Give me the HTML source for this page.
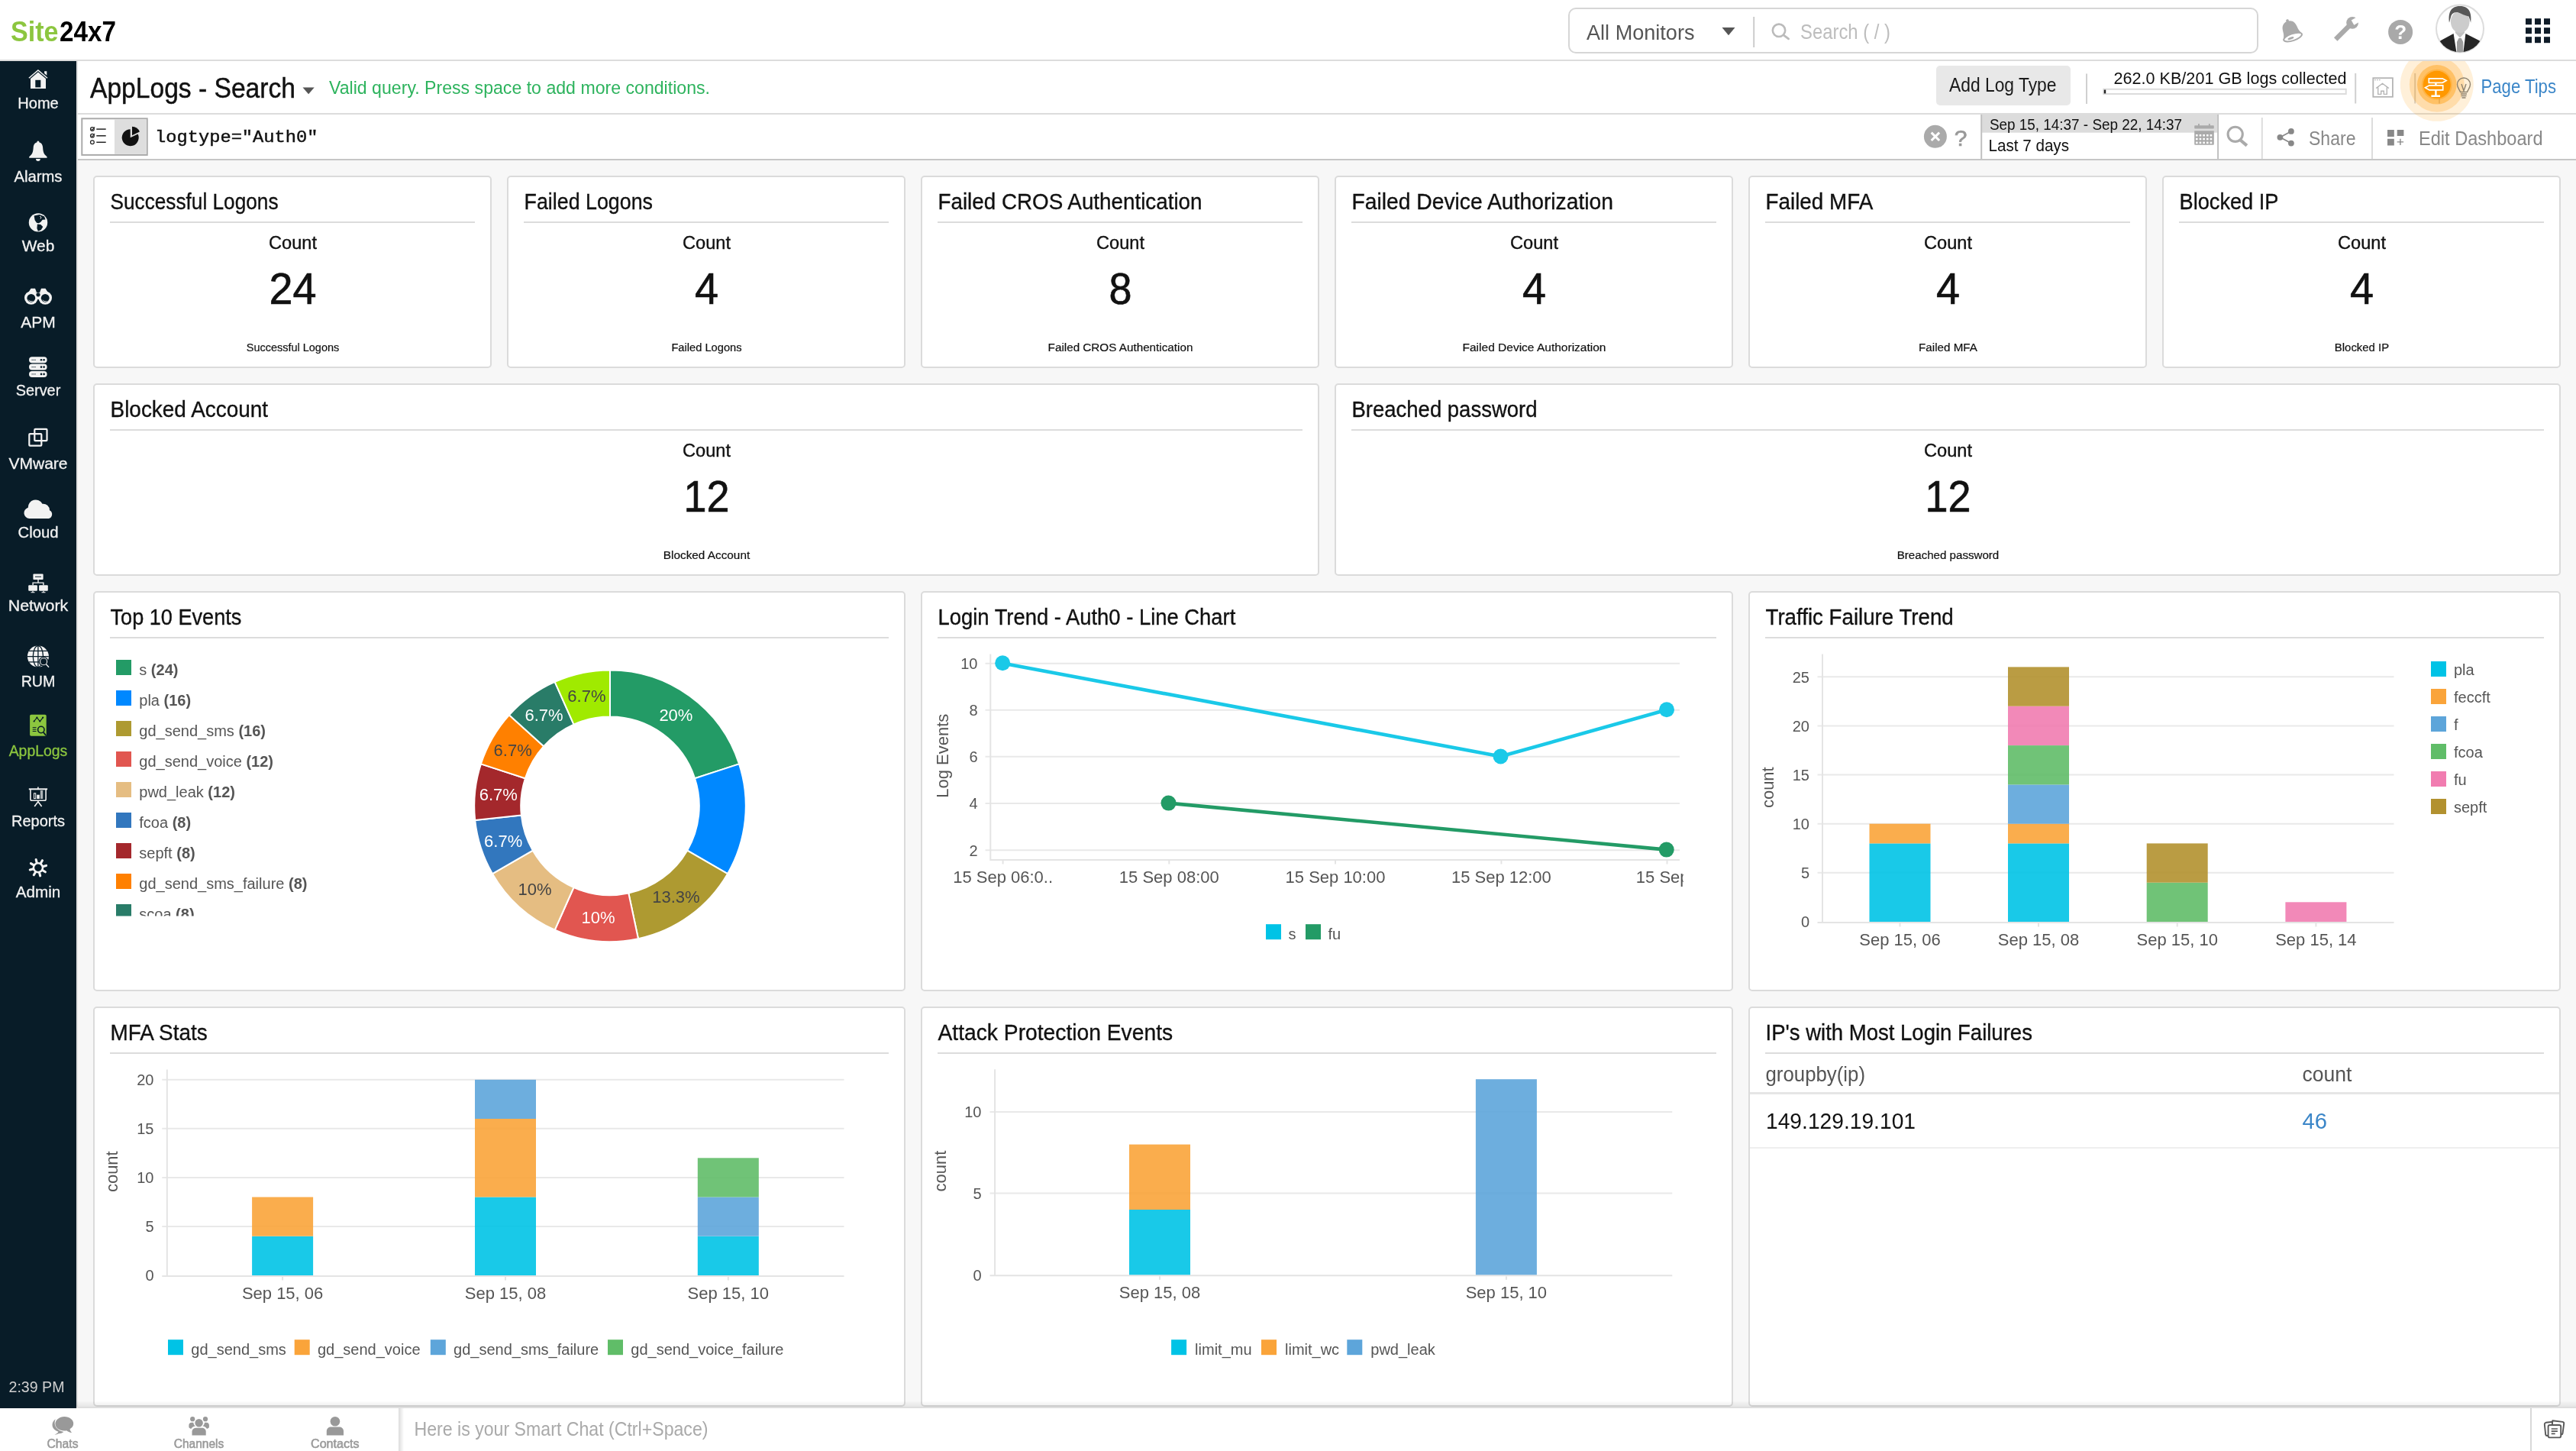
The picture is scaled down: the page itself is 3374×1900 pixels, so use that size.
<!DOCTYPE html>
<html lang="en"><head><meta charset="utf-8"><title>AppLogs - Search | Site24x7</title>
<style>
html,body{margin:0;padding:0}
body{width:3374px;height:1900px;background:#f7f7f7;position:relative;overflow:hidden;font-family:"Liberation Sans",sans-serif}
body>div{position:absolute;box-sizing:content-box}
#ov{position:absolute;left:0;top:0;will-change:transform;font-family:"Liberation Sans",sans-serif}
#ov text{white-space:pre}
</style></head><body>
<div class="hdr" style="left:0px;top:0px;width:3374px;height:78px;background:#fff;border-bottom:2px solid #dcdcdc"></div>
<div style="left:100px;top:80px;width:2px;height:1762px;background:#e2e2e2"></div>
<div class="titlebar" style="left:102px;top:80px;width:3272px;height:68px;background:#fff;border-bottom:2px solid #dcdcdc"></div>
<div class="querybar" style="left:102px;top:150px;width:3272px;height:58px;background:#fff;border-bottom:2px solid #c6c6c6"></div>
<div class="chatbar" style="left:0px;top:1842px;width:3374px;height:56px;background:#fff;border-top:2px solid #dedede"></div>
<div class="nav" style="left:0px;top:80px;width:100px;height:1764px;background:#081c28"></div>
<div class="card" style="left:122px;top:230px;width:518px;height:248px;background:#fff;border:2px solid #dbdbdb;border-radius:5px"></div>
<div style="left:144px;top:290px;width:478px;height:2px;background:#dcdcdc"></div>
<div class="card" style="left:664px;top:230px;width:518px;height:248px;background:#fff;border:2px solid #dbdbdb;border-radius:5px"></div>
<div style="left:686px;top:290px;width:478px;height:2px;background:#dcdcdc"></div>
<div class="card" style="left:1206px;top:230px;width:518px;height:248px;background:#fff;border:2px solid #dbdbdb;border-radius:5px"></div>
<div style="left:1228px;top:290px;width:478px;height:2px;background:#dcdcdc"></div>
<div class="card" style="left:1748px;top:230px;width:518px;height:248px;background:#fff;border:2px solid #dbdbdb;border-radius:5px"></div>
<div style="left:1770px;top:290px;width:478px;height:2px;background:#dcdcdc"></div>
<div class="card" style="left:2290px;top:230px;width:518px;height:248px;background:#fff;border:2px solid #dbdbdb;border-radius:5px"></div>
<div style="left:2312px;top:290px;width:478px;height:2px;background:#dcdcdc"></div>
<div class="card" style="left:2832px;top:230px;width:518px;height:248px;background:#fff;border:2px solid #dbdbdb;border-radius:5px"></div>
<div style="left:2854px;top:290px;width:478px;height:2px;background:#dcdcdc"></div>
<div class="card" style="left:122px;top:502px;width:1602px;height:248px;background:#fff;border:2px solid #dbdbdb;border-radius:5px"></div>
<div style="left:144px;top:562px;width:1562px;height:2px;background:#dcdcdc"></div>
<div class="card" style="left:1748px;top:502px;width:1602px;height:248px;background:#fff;border:2px solid #dbdbdb;border-radius:5px"></div>
<div style="left:1770px;top:562px;width:1562px;height:2px;background:#dcdcdc"></div>
<div class="card" style="left:122px;top:774px;width:1060px;height:520px;background:#fff;border:2px solid #dbdbdb;border-radius:5px"></div>
<div style="left:144px;top:834px;width:1020px;height:2px;background:#dcdcdc"></div>
<div class="card" style="left:1206px;top:774px;width:1060px;height:520px;background:#fff;border:2px solid #dbdbdb;border-radius:5px"></div>
<div style="left:1228px;top:834px;width:1020px;height:2px;background:#dcdcdc"></div>
<div class="card" style="left:2290px;top:774px;width:1060px;height:520px;background:#fff;border:2px solid #dbdbdb;border-radius:5px"></div>
<div style="left:2312px;top:834px;width:1020px;height:2px;background:#dcdcdc"></div>
<div class="card" style="left:122px;top:1318px;width:1060px;height:520px;background:#fff;border:2px solid #dbdbdb;border-radius:5px"></div>
<div style="left:144px;top:1378px;width:1020px;height:2px;background:#dcdcdc"></div>
<div class="card" style="left:1206px;top:1318px;width:1060px;height:520px;background:#fff;border:2px solid #dbdbdb;border-radius:5px"></div>
<div style="left:1228px;top:1378px;width:1020px;height:2px;background:#dcdcdc"></div>
<div class="card" style="left:2290px;top:1318px;width:1060px;height:520px;background:#fff;border:2px solid #dbdbdb;border-radius:5px"></div>
<div style="left:2312px;top:1378px;width:1020px;height:2px;background:#dcdcdc"></div>
<div style="left:2292px;top:1430px;width:1060px;height:3px;background:#e6e6e6"></div>
<div style="left:2292px;top:1502px;width:1060px;height:2px;background:#efefef"></div>
<svg id="ov" width="3374" height="1900" viewBox="0 0 3374 1900">
<text x="144.5" y="274.0" font-size="29" textLength="220.0" lengthAdjust="spacingAndGlyphs" fill="#111" stroke="#111" stroke-width=".35">Successful Logons</text>
<text x="383.5" y="326.0" font-size="23" text-anchor="middle" textLength="63.0" lengthAdjust="spacingAndGlyphs" fill="#111" stroke="#111" stroke-width=".35">Count</text>
<text x="383.5" y="398.0" font-size="58" text-anchor="middle" textLength="62.0" lengthAdjust="spacingAndGlyphs" fill="#111" stroke="#111" stroke-width=".7">24</text>
<text x="383.5" y="460.0" font-size="15.5" text-anchor="middle" textLength="121.5" lengthAdjust="spacingAndGlyphs" fill="#111" stroke="#111" stroke-width=".2">Successful Logons</text>
<text x="686.5" y="274.0" font-size="29" textLength="168.5" lengthAdjust="spacingAndGlyphs" fill="#111" stroke="#111" stroke-width=".35">Failed Logons</text>
<text x="925.5" y="326.0" font-size="23" text-anchor="middle" textLength="63.0" lengthAdjust="spacingAndGlyphs" fill="#111" stroke="#111" stroke-width=".35">Count</text>
<text x="925.5" y="398.0" font-size="58" text-anchor="middle" textLength="31.0" lengthAdjust="spacingAndGlyphs" fill="#111" stroke="#111" stroke-width=".7">4</text>
<text x="925.5" y="460.0" font-size="15.5" text-anchor="middle" textLength="92.2" lengthAdjust="spacingAndGlyphs" fill="#111" stroke="#111" stroke-width=".2">Failed Logons</text>
<text x="1228.5" y="274.0" font-size="29" textLength="346.0" lengthAdjust="spacingAndGlyphs" fill="#111" stroke="#111" stroke-width=".35">Failed CROS Authentication</text>
<text x="1467.5" y="326.0" font-size="23" text-anchor="middle" textLength="63.0" lengthAdjust="spacingAndGlyphs" fill="#111" stroke="#111" stroke-width=".35">Count</text>
<text x="1467.5" y="398.0" font-size="58" text-anchor="middle" textLength="30.0" lengthAdjust="spacingAndGlyphs" fill="#111" stroke="#111" stroke-width=".7">8</text>
<text x="1467.5" y="460.0" font-size="15.5" text-anchor="middle" textLength="189.8" lengthAdjust="spacingAndGlyphs" fill="#111" stroke="#111" stroke-width=".2">Failed CROS Authentication</text>
<text x="1770.5" y="274.0" font-size="29" textLength="342.5" lengthAdjust="spacingAndGlyphs" fill="#111" stroke="#111" stroke-width=".35">Failed Device Authorization</text>
<text x="2009.5" y="326.0" font-size="23" text-anchor="middle" textLength="63.0" lengthAdjust="spacingAndGlyphs" fill="#111" stroke="#111" stroke-width=".35">Count</text>
<text x="2009.5" y="398.0" font-size="58" text-anchor="middle" textLength="31.0" lengthAdjust="spacingAndGlyphs" fill="#111" stroke="#111" stroke-width=".7">4</text>
<text x="2009.5" y="460.0" font-size="15.5" text-anchor="middle" textLength="188.0" lengthAdjust="spacingAndGlyphs" fill="#111" stroke="#111" stroke-width=".2">Failed Device Authorization</text>
<text x="2312.5" y="274.0" font-size="29" textLength="140.7" lengthAdjust="spacingAndGlyphs" fill="#111" stroke="#111" stroke-width=".35">Failed MFA</text>
<text x="2551.5" y="326.0" font-size="23" text-anchor="middle" textLength="63.0" lengthAdjust="spacingAndGlyphs" fill="#111" stroke="#111" stroke-width=".35">Count</text>
<text x="2551.5" y="398.0" font-size="58" text-anchor="middle" textLength="31.0" lengthAdjust="spacingAndGlyphs" fill="#111" stroke="#111" stroke-width=".7">4</text>
<text x="2551.5" y="460.0" font-size="15.5" text-anchor="middle" textLength="76.8" lengthAdjust="spacingAndGlyphs" fill="#111" stroke="#111" stroke-width=".2">Failed MFA</text>
<text x="2854.5" y="274.0" font-size="29" textLength="130.0" lengthAdjust="spacingAndGlyphs" fill="#111" stroke="#111" stroke-width=".35">Blocked IP</text>
<text x="3093.5" y="326.0" font-size="23" text-anchor="middle" textLength="63.0" lengthAdjust="spacingAndGlyphs" fill="#111" stroke="#111" stroke-width=".35">Count</text>
<text x="3093.5" y="398.0" font-size="58" text-anchor="middle" textLength="31.0" lengthAdjust="spacingAndGlyphs" fill="#111" stroke="#111" stroke-width=".7">4</text>
<text x="3093.5" y="460.0" font-size="15.5" text-anchor="middle" textLength="71.4" lengthAdjust="spacingAndGlyphs" fill="#111" stroke="#111" stroke-width=".2">Blocked IP</text>
<text x="144.5" y="546.0" font-size="29" textLength="206.6" lengthAdjust="spacingAndGlyphs" fill="#111" stroke="#111" stroke-width=".35">Blocked Account</text>
<text x="925.5" y="598.0" font-size="23" text-anchor="middle" textLength="63.0" lengthAdjust="spacingAndGlyphs" fill="#111" stroke="#111" stroke-width=".35">Count</text>
<text x="925.5" y="670.0" font-size="58" text-anchor="middle" textLength="60.0" lengthAdjust="spacingAndGlyphs" fill="#111" stroke="#111" stroke-width=".7">12</text>
<text x="925.5" y="732.0" font-size="15.5" text-anchor="middle" textLength="113.4" lengthAdjust="spacingAndGlyphs" fill="#111" stroke="#111" stroke-width=".2">Blocked Account</text>
<text x="1770.5" y="546.0" font-size="29" textLength="243.0" lengthAdjust="spacingAndGlyphs" fill="#111" stroke="#111" stroke-width=".35">Breached password</text>
<text x="2551.5" y="598.0" font-size="23" text-anchor="middle" textLength="63.0" lengthAdjust="spacingAndGlyphs" fill="#111" stroke="#111" stroke-width=".35">Count</text>
<text x="2551.5" y="670.0" font-size="58" text-anchor="middle" textLength="60.0" lengthAdjust="spacingAndGlyphs" fill="#111" stroke="#111" stroke-width=".7">12</text>
<text x="2551.5" y="732.0" font-size="15.5" text-anchor="middle" textLength="133.5" lengthAdjust="spacingAndGlyphs" fill="#111" stroke="#111" stroke-width=".2">Breached password</text>
<text x="144.5" y="818.0" font-size="29" textLength="171.8" lengthAdjust="spacingAndGlyphs" fill="#111" stroke="#111" stroke-width=".35">Top 10 Events</text>
<text x="1228.5" y="818.0" font-size="29" textLength="389.8" lengthAdjust="spacingAndGlyphs" fill="#111" stroke="#111" stroke-width=".35">Login Trend - Auth0 - Line Chart</text>
<text x="2312.5" y="818.0" font-size="29" textLength="246.2" lengthAdjust="spacingAndGlyphs" fill="#111" stroke="#111" stroke-width=".35">Traffic Failure Trend</text>
<text x="144.5" y="1362.0" font-size="29" textLength="127.1" lengthAdjust="spacingAndGlyphs" fill="#111" stroke="#111" stroke-width=".35">MFA Stats</text>
<text x="1228.5" y="1362.0" font-size="29" textLength="307.6" lengthAdjust="spacingAndGlyphs" fill="#111" stroke="#111" stroke-width=".35">Attack Protection Events</text>
<text x="2312.5" y="1362.0" font-size="29" textLength="349.4" lengthAdjust="spacingAndGlyphs" fill="#111" stroke="#111" stroke-width=".35">IP's with Most Login Failures</text>
<text x="14.0" y="54.0" font-size="36.5" textLength="62.5" lengthAdjust="spacingAndGlyphs" font-weight="bold" fill="#8cc63f">Site</text>
<text x="78.0" y="54.0" font-size="36.5" textLength="74.0" lengthAdjust="spacingAndGlyphs" font-weight="bold" fill="#000">24x7</text>
<rect x="2055" y="11" width="902" height="58" rx="9" fill="#fff" stroke="#d6d6d6" stroke-width="2"/>
<text x="2078.0" y="52.0" font-size="27.5" textLength="141.5" lengthAdjust="spacingAndGlyphs" fill="#555">All Monitors</text>
<path d="M2255.5 36h17l-8.5 10.3z" fill="#555"/>
<path d="M2297.2 22v40" stroke="#ccc" stroke-width="2"/>
<circle cx="2330" cy="39.8" r="8.2" fill="none" stroke="#bbb" stroke-width="2.6"/><path d="M2336 45.8l6.6 5" stroke="#bbb" stroke-width="2.8" stroke-linecap="round"/>
<text x="2358.0" y="51.0" font-size="27.5" textLength="118.0" lengthAdjust="spacingAndGlyphs" fill="#bdbdbd">Search ( / )</text>
<g transform="translate(3003.100 48.600) rotate(-19)" fill="#aaa"><path d="M-13.400 0C-11.500-3-10.300-6-10-8.600C-9.700-12-9.500-15-8.300-17.200C-6.500-20.500-3.500-22 0-22C3.500-22 6.500-20.500 8.300-17.200C9.500-15 9.700-12 10-8.600C10.300-6 11.500-3 13.400 0z"/><circle cx=".3" cy="-22.600" r="1.900"/><ellipse rx="12.500" ry="4.500" fill="#fff" stroke="#aaa" stroke-width="1.900"/><ellipse cx="-3" cy=".5" rx="4.200" ry="1.500"/></g>
<g><path d="M3059.200 51.600L3079 31.800" stroke="#aaa" stroke-width="6.300"/><circle cx="3081.100" cy="29.800" r="7.900" fill="#aaa"/><path d="M3081.500 29.550L3091.500 23.800" stroke="#fff" stroke-width="7.200"/></g>
<circle cx="3144.1" cy="41.9" r="16" fill="#a9a9a9"/>
<text x="3144.3" y="51.3" font-size="26" text-anchor="middle" font-weight="bold" fill="#fff">?</text>
<defs><clipPath id="av"><circle cx="3222" cy="37.6" r="30.8"/></clipPath></defs>
<circle cx="3222" cy="37.6" r="31" fill="#fff" stroke="#dcdcdc" stroke-width="2"/>
<g clip-path="url(#av)"><path d="M3188 72L3196.500 53.200L3213.600 44.100L3218 72ZM3256 72L3247.600 53.200L3229.400 44.100L3226 72Z" fill="#262626"/><path d="M3220.500 50h3.200l2.600 5l-.2 17h-8l-.2-17z" fill="#9c9c9c"/><path d="M3215.900 36h12.100v7l-6 6.500l-6.100-6.500z" fill="#c2c2c2"/><ellipse cx="3222.200" cy="28.500" rx="12.300" ry="14.500" fill="#cccccc"/><path d="M3208 29.800C3206.500 18 3209 8 3222 8C3235 8 3237.500 18 3236.200 29.800C3235.500 27 3234.500 24 3233.500 21.500C3229 20.500 3224 18 3219 16C3215 15.500 3212 17 3210.500 20.500C3209.500 23.500 3209 26.500 3208 29.800Z" fill="#575757"/></g>
<rect x="3308" y="24.2" width="8" height="8" fill="#0f1c28"/>
<rect x="3320" y="24.2" width="8" height="8" fill="#0f1c28"/>
<rect x="3332" y="24.2" width="8" height="8" fill="#0f1c28"/>
<rect x="3308" y="36.2" width="8" height="8" fill="#0f1c28"/>
<rect x="3320" y="36.2" width="8" height="8" fill="#0f1c28"/>
<rect x="3332" y="36.2" width="8" height="8" fill="#0f1c28"/>
<rect x="3308" y="48.2" width="8" height="8" fill="#0f1c28"/>
<rect x="3320" y="48.2" width="8" height="8" fill="#0f1c28"/>
<rect x="3332" y="48.2" width="8" height="8" fill="#0f1c28"/>
<text x="118.0" y="127.6" font-size="36.5" textLength="269.0" lengthAdjust="spacingAndGlyphs" fill="#111" stroke="#111" stroke-width=".45">AppLogs - Search</text>
<path d="M396.5 114.5h15.2l-7.6 8.8z" fill="#555"/>
<text x="431.0" y="123.0" font-size="24.5" textLength="499.0" lengthAdjust="spacingAndGlyphs" fill="#2db35d">Valid query. Press space to add more conditions.</text>
<rect x="2536" y="86" width="176" height="52" rx="5" fill="#e8e8e8"/>
<text x="2553.0" y="120.2" font-size="26" textLength="140.5" lengthAdjust="spacingAndGlyphs" fill="#1a1a1a">Add Log Type</text>
<path d="M2733 96.5v39.5M3085.2 96v39.5M3163.2 96v39.5" stroke="#d0d0d0" stroke-width="2"/>
<text x="2768.5" y="109.5" font-size="22" textLength="305.0" lengthAdjust="spacingAndGlyphs" fill="#111">262.0 KB/201 GB logs collected</text>
<rect x="2755.3" y="116.8" width="317.4" height="6.2" fill="#fff" stroke="#dcdcdc" stroke-width="2"/><rect x="2755.8" y="117.6" width="2.4" height="4.8" fill="#222"/>
<g fill="none" stroke="#b4b4b4"><rect x="3108.300" y="102.200" width="25.600" height="24.600" stroke-width="1.800"/><path d="M3112.100 115.600l8.400-6.300l8.400 6.300M3114.700 114.500v8.900h4v-4.200h3.600v4.200h4v-8.900" stroke-width="1.400"/><path d="M3110.200 104.600h1.600m1.300 0h1.600m1.300 0h1.600" stroke-width="1.100"/></g>
<path d="M3195 96v39.500" stroke="#d0d0d0" stroke-width="2"/>
<defs><clipPath id="pc"><rect x="3100" y="80" width="274" height="120"/></clipPath></defs><g clip-path="url(#pc)"><circle cx="3191.800" cy="110.800" r="48" fill="#ff9800" fill-opacity=".15"/><circle cx="3191.800" cy="110.800" r="36" fill="#ff9800" fill-opacity=".22"/><circle cx="3191.800" cy="110.800" r="25.8" fill="#ff9800" fill-opacity=".4"/><circle cx="3191.800" cy="110.800" r="20" fill="#ff9800" fill-opacity=".35"/><circle cx="3191.800" cy="110.800" r="18" fill="#ff9800"/></g>
<g fill="none" stroke="#fff" stroke-width="1.700"><path d="M3181.300 102.800h17.800l5 2.750l-5 2.750h-17.800z"/><path d="M3199.700 111.800h-17.800l-5.400 3.050l5.400 3.050h17.800z"/><path d="M3190.400 108.300v3.500M3190.400 118v7.700M3184.400 125.700h11.600" stroke-width="2.400"/></g>
<g fill="none" stroke="#8e836f" stroke-width="1.400"><path d="M3222.5 120.5c-1-3-4-5.500-4-10a8.500 8.500 0 0 1 17 0c0 4.500-3 7-4 10z"/><path d="M3223 123h8M3223.500 125.500h7M3224.500 128h5"/><path d="M3224 110l3 9l3-9"/></g>
<text x="3249.5" y="121.9" font-size="25" textLength="98.5" lengthAdjust="spacingAndGlyphs" fill="#3b86c8">Page Tips</text>
<rect x="107.3" y="155.3" width="85.4" height="47.6" fill="#fff" stroke="#aaa" stroke-width="2"/><rect x="150" y="156.3" width="41.7" height="45.6" fill="#dedede"/>
<circle cx="120.9" cy="169.1" r="2.4" fill="none" stroke="#222" stroke-width="1.2"/><path d="M126.3 169.1h12.4" stroke="#222" stroke-width="1.5"/>
<circle cx="120.9" cy="177.8" r="2.4" fill="none" stroke="#222" stroke-width="1.2"/><path d="M126.3 177.8h12.4" stroke="#222" stroke-width="1.5"/>
<circle cx="120.9" cy="186.3" r="2.4" fill="none" stroke="#222" stroke-width="1.2"/><path d="M126.3 186.3h12.4" stroke="#222" stroke-width="1.5"/>
<path d="M119.600 168.800l1.200 1.500l3.300-4M119.600 177.500l1.200 1.500l3.300-4" fill="none" stroke="#222" stroke-width="1.100"/>
<path d="M170.7 180.2V169.200a11 11 0 1 0 9.9 6.200z" fill="#111"/><path d="M173 177.300v-11.500a11.300 11.300 0 0 1 9.900 6.600z" fill="#111"/>
<text x="203.0" y="186.0" font-size="22.6" textLength="213.5" lengthAdjust="spacingAndGlyphs" font-family="Liberation Mono" fill="#111" stroke="#111" stroke-width=".45">logtype="Auth0"</text>
<circle cx="2534.9" cy="178.800" r="15" fill="#aaa"/><path d="M2529.700 173.600l10.400 10.400M2540.100 173.600l-10.400 10.400" stroke="#fff" stroke-width="3"/>
<text x="2568.0" y="190.9" font-size="30" text-anchor="middle" fill="#999" stroke="#999" stroke-width=".7">?</text>
<rect x="2596" y="150" width="308.200" height="23.700" fill="#dcdcdc"/>
<path d="M2595.200 150v58M2905.100 150v58" stroke="#c0c0c0" stroke-width="2"/>
<text x="2606.0" y="169.5" font-size="19.5" textLength="252.0" lengthAdjust="spacingAndGlyphs" fill="#111">Sep 15, 14:37 - Sep 22, 14:37</text>
<text x="2604.5" y="197.8" font-size="22.5" textLength="105.5" lengthAdjust="spacingAndGlyphs" fill="#111">Last 7 days</text>
<g fill="#aaa"><rect x="2874.200" y="164.200" width="25.600" height="4.400" rx=".8"/><rect x="2879" y="162.100" width="1.900" height="3"/><rect x="2892.900" y="162.100" width="1.900" height="3"/><path d="M2874.200 171.200h25.600v17.600q0 1-1 1h-23.600q-1 0-1-1z"/></g>
<g fill="#fff"><rect x="2876.00" y="176.00" width="2.600" height="2.500"/><rect x="2880.66" y="176.00" width="2.600" height="2.500"/><rect x="2885.32" y="176.00" width="2.600" height="2.500"/><rect x="2889.98" y="176.00" width="2.600" height="2.500"/><rect x="2894.64" y="176.00" width="2.600" height="2.500"/><rect x="2876.00" y="180.80" width="2.600" height="2.500"/><rect x="2880.66" y="180.80" width="2.600" height="2.500"/><rect x="2885.32" y="180.80" width="2.600" height="2.500"/><rect x="2889.98" y="180.80" width="2.600" height="2.500"/><rect x="2894.64" y="180.80" width="2.600" height="2.500"/><rect x="2876.00" y="185.60" width="2.600" height="2.500"/><rect x="2880.66" y="185.60" width="2.600" height="2.500"/><rect x="2885.32" y="185.60" width="2.600" height="2.500"/><rect x="2889.98" y="185.60" width="2.600" height="2.500"/><rect x="2894.64" y="185.60" width="2.600" height="2.500"/></g>
<circle cx="2927.700" cy="175.800" r="9.600" fill="none" stroke="#aaa" stroke-width="3.100"/><path d="M2934.500 183.500l8.400 7.200" stroke="#aaa" stroke-width="4.200"/>
<path d="M2962.800 154v54M3107 154v54" stroke="#dcdcdc" stroke-width="2"/>
<g fill="#888" stroke="#888"><path d="M2986.400 179.800L3000.900 171.900M2986.400 179.800L3000.900 187.600" stroke-width="1.700" fill="none"/><circle cx="2986.400" cy="179.800" r="3.900" stroke="none"/><circle cx="3000.900" cy="171.900" r="3.900" stroke="none"/><circle cx="3000.900" cy="187.600" r="3.900" stroke="none"/></g>
<text x="3024.0" y="189.9" font-size="25" textLength="61.5" lengthAdjust="spacingAndGlyphs" fill="#888">Share</text>
<g fill="#888"><rect x="3127" y="170" width="8.800" height="9"/><rect x="3139.700" y="170" width="8.700" height="8"/><rect x="3127" y="181.800" width="8.800" height="8.700"/><path d="M3139.700 185.200h8.400v1.400h-8.400zM3143.200 181.700h1.400v8.400h-1.400z"/></g>
<text x="3168.0" y="189.9" font-size="25" textLength="162.5" lengthAdjust="spacingAndGlyphs" fill="#888">Edit Dashboard</text>
<g fill="#f2f2f2"><path d="M49.900 94.600L60 102.900V115.900H40V102.900z"/><path d="M37.900 102.300L49.900 92L62 102.300" fill="none" stroke="#f2f2f2" stroke-width="1.500"/><path d="M58.100 93.200h3.200v5.600l-3.200-2.800z"/><rect x="46.300" y="104.800" width="7" height="9.600" fill="#081c28"/></g>
<text x="50.0" y="141.5" font-size="19.8" text-anchor="middle" textLength="53.5" lengthAdjust="spacingAndGlyphs" fill="#f2f2f2" stroke="#f2f2f2" stroke-width=".3">Home</text>
<g fill="#f2f2f2"><path d="M38.300 206.700c-.5-1.300 .300-1.900 1.500-2.900c3-2.700 3.600-6 3.900-10.800c.3-4.300 2.500-6.800 6.200-6.800s5.900 2.500 6.200 6.800c.3 4.800 .9 8.100 3.900 10.800c1.200 1 2 1.600 1.500 2.900z"/><circle cx="49.900" cy="186" r="1.500"/><path d="M47 208h5.800a2.900 2.900 0 0 1-5.800 0z"/></g>
<text x="50.0" y="237.6" font-size="19.8" text-anchor="middle" textLength="63.0" lengthAdjust="spacingAndGlyphs" fill="#f2f2f2" stroke="#f2f2f2" stroke-width=".3">Alarms</text>
<circle cx="50" cy="291.400" r="12.200" fill="#f2f2f2"/><g fill="#081c28"><path d="M44.600 282.500L51.800 281.100L58.100 283.500L59.500 287.400L55.700 287.800L53.300 290.700L50.900 292.200L48 291.700L45.600 288.300z"/><path d="M48.900 293.600L53.300 294.100L56.200 297L53.800 300.900L49.900 302.800L48.400 298.900z"/></g><path d="M52 283l2 1.500l-1 2" stroke="#f2f2f2" stroke-width="1" fill="none"/>
<text x="50.0" y="328.9" font-size="19.8" text-anchor="middle" textLength="42.5" lengthAdjust="spacingAndGlyphs" fill="#f2f2f2" stroke="#f2f2f2" stroke-width=".3">Web</text>
<g fill="#f2f2f2"><circle cx="40.800" cy="390" r="8.800"/><circle cx="59.200" cy="390" r="8.800"/><path d="M36.500 384l4-6.200h5.500l2 5z M63.500 384l-4-6.200h-5.500l-2 5z"/><rect x="46" y="383" width="8" height="9"/><circle cx="50" cy="385.800" r="2.600" fill="#081c28"/><circle cx="40.800" cy="390.300" r="5.400" fill="#081c28"/><circle cx="59.200" cy="390.300" r="5.400" fill="#081c28"/><path d="M37 392a4 4 0 0 0 7 1.500a5.500 5.500 0 0 1-7-1.500zM55.400 392a4 4 0 0 0 7 1.500a5.500 5.500 0 0 1-7-1.500z"/></g>
<text x="50.0" y="428.6" font-size="19.8" text-anchor="middle" textLength="45.5" lengthAdjust="spacingAndGlyphs" fill="#f2f2f2" stroke="#f2f2f2" stroke-width=".3">APM</text>
<rect x="38" y="467.3" width="23.600" height="8" rx="4" fill="#f2f2f2"/><circle cx="54" cy="471.3" r="1.300" fill="#081c28"/><circle cx="57.600" cy="471.3" r="1.300" fill="#081c28"/><path d="M41.500 471.3h6" stroke="#081c28" stroke-width="1" stroke-dasharray="1.200 .8"/>
<rect x="38" y="476.6" width="23.600" height="8" rx="4" fill="#f2f2f2"/><circle cx="54" cy="480.6" r="1.300" fill="#081c28"/><circle cx="57.600" cy="480.6" r="1.300" fill="#081c28"/><path d="M41.500 480.6h6" stroke="#081c28" stroke-width="1" stroke-dasharray="1.200 .8"/>
<rect x="38" y="485.9" width="23.600" height="8" rx="4" fill="#f2f2f2"/><circle cx="54" cy="489.9" r="1.300" fill="#081c28"/><circle cx="57.600" cy="489.9" r="1.300" fill="#081c28"/><path d="M41.500 489.9h6" stroke="#081c28" stroke-width="1" stroke-dasharray="1.200 .8"/>
<text x="50.0" y="517.7" font-size="19.8" text-anchor="middle" textLength="58.5" lengthAdjust="spacingAndGlyphs" fill="#f2f2f2" stroke="#f2f2f2" stroke-width=".3">Server</text>
<g fill="none" stroke="#f2f2f2" stroke-width="2.200"><rect x="45.300" y="561.900" width="16.200" height="15.300" rx="1"/><rect x="38.300" y="568.100" width="16" height="15.600" rx="1"/></g>
<text x="50.0" y="613.7" font-size="19.8" text-anchor="middle" textLength="77.2" lengthAdjust="spacingAndGlyphs" fill="#f2f2f2" stroke="#f2f2f2" stroke-width=".3">VMware</text>
<path d="M38.500 679a7.300 7.300 0 0 1-1.800-14.300a10 10 0 0 1 18.800-5a8.500 8.500 0 0 1 9.500 8.600a5.700 5.700 0 0 1-1.500 10.700z" fill="#f2f2f2"/>
<text x="50.0" y="703.5" font-size="19.8" text-anchor="middle" textLength="52.9" lengthAdjust="spacingAndGlyphs" fill="#f2f2f2" stroke="#f2f2f2" stroke-width=".3">Cloud</text>
<g fill="#f2f2f2"><rect x="43.400" y="751.400" width="13.200" height="7.500" rx="1"/><rect x="37.200" y="766.300" width="11.700" height="7.400" rx="1"/><rect x="51.100" y="766.300" width="11.700" height="7.400" rx="1"/><path d="M49.300 758.900h1.400v3.500h6.900v3.900h-1.400v-2.500h-12.400v2.500h-1.400v-3.900h6.900z"/><path d="M40.500 775.300h5v1h-5zM54.500 775.300h5v1h-5zM42.400 773.700h1.200v1.800h-1.200zM56.400 773.700h1.200v1.800h-1.200z"/></g><path d="M46 755.200h8" stroke="#081c28" stroke-width="1"/>
<text x="50.0" y="799.8" font-size="19.8" text-anchor="middle" textLength="78.5" lengthAdjust="spacingAndGlyphs" fill="#f2f2f2" stroke="#f2f2f2" stroke-width=".3">Network</text>
<circle cx="49.900" cy="859.600" r="14" fill="#f2f2f2"/><g fill="none" stroke="#081c28" stroke-width="1.300"><ellipse cx="49.900" cy="859.600" rx="6.600" ry="14"/><path d="M49.900 845.600v28M35.900 859.600h28M38 852.400h23.800M38 866.800h23.800"/></g><circle cx="57.100" cy="866.300" r="6.300" fill="#081c28"/><circle cx="57.100" cy="866.300" r="4.500" fill="none" stroke="#f2f2f2" stroke-width="1.100"/><path d="M60.400 869.800l3.600 3.900" stroke="#f2f2f2" stroke-width="1.400"/>
<text x="50.0" y="899.2" font-size="19.8" text-anchor="middle" textLength="44.7" lengthAdjust="spacingAndGlyphs" fill="#f2f2f2" stroke="#f2f2f2" stroke-width=".3">RUM</text>
<rect x="39.100" y="935.800" width="21.600" height="27.900" rx="1.800" fill="#8cc63f"/><g fill="none" stroke="#081c28" stroke-width="1.200"><path d="M44.600 944.500l3.800-4.900l3.900 4.900l3.900-4.900"/><path d="M42.700 952.600h4.800M42.700 955.100h4.800M42.700 957.500h4.800" stroke-width="1"/><circle cx="53.800" cy="955.500" r="4.200" stroke-width="1.600"/><path d="M56.800 958.900l3.300 3.900" stroke-width="1.800"/></g><g fill="#081c28"><circle cx="44.600" cy="944.500" r="1.100"/><circle cx="48.400" cy="939.600" r="1.100"/><circle cx="52.300" cy="944.500" r="1.100"/><circle cx="56.200" cy="939.600" r="1.100"/></g>
<text x="50.0" y="989.5" font-size="19.8" text-anchor="middle" textLength="76.7" lengthAdjust="spacingAndGlyphs" fill="#8cc63f" stroke="#8cc63f" stroke-width=".3">AppLogs</text>
<g fill="none" stroke="#f2f2f2" stroke-width="1.600"><path d="M37.800 1033.300h24.300" stroke-width="2"/><path d="M39.900 1033.500v12.900q0 1.800 1.800 1.800h16.600q1.800 0 1.800-1.800v-12.900"/><path d="M49.900 1030.600v2.400M49.900 1048.400v1.800M49.900 1049.700l-4.700 6.200M49.900 1049.700l4.700 6.200"/><rect x="44.500" y="1038.800" width="2.200" height="6.800" stroke-width="1"/></g><g fill="#f2f2f2"><rect x="48.200" y="1040.700" width="3.600" height="5.300"/><rect x="52.800" y="1035" width="3.400" height="11" fill-opacity=".7"/></g>
<text x="50.0" y="1081.5" font-size="19.8" text-anchor="middle" textLength="70.1" lengthAdjust="spacingAndGlyphs" fill="#f2f2f2" stroke="#f2f2f2" stroke-width=".3">Reports</text>
<g stroke="#f2f2f2" stroke-width="3.100" stroke-linecap="round"><path d="M49.900 1136.200L47.15 1125.55" /><path d="M49.900 1136.200L55.48 1126.72" /><path d="M49.900 1136.200L60.55 1133.45" /><path d="M49.900 1136.200L59.38 1141.78" /><path d="M49.900 1136.200L52.65 1146.85" /><path d="M49.900 1136.200L44.32 1145.68" /><path d="M49.900 1136.200L39.25 1138.95" /><path d="M49.900 1136.200L40.42 1130.62" /></g><circle cx="49.900" cy="1136.200" r="7.300" fill="#f2f2f2"/><circle cx="49.900" cy="1136.200" r="4.700" fill="#081c28"/>
<text x="50.0" y="1175.2" font-size="19.8" text-anchor="middle" textLength="58.5" lengthAdjust="spacingAndGlyphs" fill="#f2f2f2" stroke="#f2f2f2" stroke-width=".3">Admin</text>
<text x="11.5" y="1823.0" font-size="20" textLength="73.0" lengthAdjust="spacingAndGlyphs" fill="#cfcfcf">2:39 PM</text>
<defs><clipPath id="lg"><rect x="140" y="850" width="420" height="349.5"/></clipPath></defs><g clip-path="url(#lg)">
<rect x="152" y="864" width="20" height="20" fill="#239b66"/>
<text x="182.3" y="883.8" font-size="20" fill="#555555">s <tspan font-weight="bold">(24)</tspan></text>
<rect x="152" y="904" width="20" height="20" fill="#0088ff"/>
<text x="182.3" y="923.8" font-size="20" fill="#555555">pla <tspan font-weight="bold">(16)</tspan></text>
<rect x="152" y="944" width="20" height="20" fill="#ae9a31"/>
<text x="182.3" y="963.8" font-size="20" fill="#555555">gd_send_sms <tspan font-weight="bold">(16)</tspan></text>
<rect x="152" y="984" width="20" height="20" fill="#e15650"/>
<text x="182.3" y="1003.8" font-size="20" fill="#555555">gd_send_voice <tspan font-weight="bold">(12)</tspan></text>
<rect x="152" y="1024" width="20" height="20" fill="#e5bd82"/>
<text x="182.3" y="1043.8" font-size="20" fill="#555555">pwd_leak <tspan font-weight="bold">(12)</tspan></text>
<rect x="152" y="1064" width="20" height="20" fill="#3277be"/>
<text x="182.3" y="1083.8" font-size="20" fill="#555555">fcoa <tspan font-weight="bold">(8)</tspan></text>
<rect x="152" y="1104" width="20" height="20" fill="#a4282c"/>
<text x="182.3" y="1123.8" font-size="20" fill="#555555">sepft <tspan font-weight="bold">(8)</tspan></text>
<rect x="152" y="1144" width="20" height="20" fill="#ff8000"/>
<text x="182.3" y="1163.8" font-size="20" fill="#555555">gd_send_sms_failure <tspan font-weight="bold">(8)</tspan></text>
<rect x="152" y="1184" width="20" height="20" fill="#297c68"/>
<text x="182.3" y="1203.8" font-size="20" fill="#555555">scoa <tspan font-weight="bold">(8)</tspan></text>
</g>
<path d="M799.00 877.50A177.8 177.8 0 0 1 968.10 1000.36L910.08 1019.21A116.8 116.8 0 0 0 799.00 938.50Z" fill="#239b66" stroke="#fff" stroke-width="2" stroke-linejoin="round"/>
<path d="M968.10 1000.36A177.8 177.8 0 0 1 952.98 1144.20L900.15 1113.70A116.8 116.8 0 0 0 910.08 1019.21Z" fill="#0088ff" stroke="#fff" stroke-width="2" stroke-linejoin="round"/>
<path d="M952.98 1144.20A177.8 177.8 0 0 1 835.97 1229.21L823.28 1169.55A116.8 116.8 0 0 0 900.15 1113.70Z" fill="#ae9a31" stroke="#fff" stroke-width="2" stroke-linejoin="round"/>
<path d="M835.97 1229.21A177.8 177.8 0 0 1 726.68 1217.73L751.49 1162.00A116.8 116.8 0 0 0 823.28 1169.55Z" fill="#e15650" stroke="#fff" stroke-width="2" stroke-linejoin="round"/>
<path d="M726.68 1217.73A177.8 177.8 0 0 1 645.02 1144.20L697.85 1113.70A116.8 116.8 0 0 0 751.49 1162.00Z" fill="#e5bd82" stroke="#fff" stroke-width="2" stroke-linejoin="round"/>
<path d="M645.02 1144.20A177.8 177.8 0 0 1 622.17 1073.89L682.84 1067.51A116.8 116.8 0 0 0 697.85 1113.70Z" fill="#3277be" stroke="#fff" stroke-width="2" stroke-linejoin="round"/>
<path d="M622.17 1073.89A177.8 177.8 0 0 1 629.90 1000.36L687.92 1019.21A116.8 116.8 0 0 0 682.84 1067.51Z" fill="#a4282c" stroke="#fff" stroke-width="2" stroke-linejoin="round"/>
<path d="M629.90 1000.36A177.8 177.8 0 0 1 666.87 936.33L712.20 977.15A116.8 116.8 0 0 0 687.92 1019.21Z" fill="#ff8000" stroke="#fff" stroke-width="2" stroke-linejoin="round"/>
<path d="M666.87 936.33A177.8 177.8 0 0 1 726.68 892.87L751.49 948.60A116.8 116.8 0 0 0 712.20 977.15Z" fill="#297c68" stroke="#fff" stroke-width="2" stroke-linejoin="round"/>
<path d="M726.68 892.87A177.8 177.8 0 0 1 799.00 877.50L799.00 938.50A116.8 116.8 0 0 0 751.49 948.60Z" fill="#a0ea00" stroke="#fff" stroke-width="2" stroke-linejoin="round"/>
<text x="885.4" y="944.2" font-size="22" text-anchor="middle" fill="#fff">20%</text>
<text x="885.4" y="1182.0" font-size="22" text-anchor="middle" fill="#444">13.3%</text>
<text x="783.6" y="1209.3" font-size="22" text-anchor="middle" fill="#fff">10%</text>
<text x="700.6" y="1172.3" font-size="22" text-anchor="middle" fill="#444">10%</text>
<text x="659.2" y="1108.5" font-size="22" text-anchor="middle" fill="#fff">6.7%</text>
<text x="652.8" y="1047.7" font-size="22" text-anchor="middle" fill="#fff">6.7%</text>
<text x="671.7" y="989.6" font-size="22" text-anchor="middle" fill="#444">6.7%</text>
<text x="712.6" y="944.2" font-size="22" text-anchor="middle" fill="#fff">6.7%</text>
<text x="768.4" y="919.3" font-size="22" text-anchor="middle" fill="#444">6.7%</text>
<path d="M1290.500 868.8H2200" stroke="#e9e9e9" stroke-width="2"/>
<text x="1280.5" y="876.0" font-size="20" text-anchor="end" fill="#555555">10</text>
<path d="M1290.500 929.8H2200" stroke="#e9e9e9" stroke-width="2"/>
<text x="1280.5" y="937.0" font-size="20" text-anchor="end" fill="#555555">8</text>
<path d="M1290.500 990.8H2200" stroke="#e9e9e9" stroke-width="2"/>
<text x="1280.5" y="998.0" font-size="20" text-anchor="end" fill="#555555">6</text>
<path d="M1290.500 1052H2200" stroke="#e9e9e9" stroke-width="2"/>
<text x="1280.5" y="1059.2" font-size="20" text-anchor="end" fill="#555555">4</text>
<path d="M1290.500 1113.3H2200" stroke="#e9e9e9" stroke-width="2"/>
<text x="1280.5" y="1120.5" font-size="20" text-anchor="end" fill="#555555">2</text>
<path d="M1297.300 856.500V1126M1296.300 1126H2200" stroke="#e4e4e4" stroke-width="2" fill="none"/>
<path d="M1313.6 1127v4.500" stroke="#e4e4e4" stroke-width="2"/>
<path d="M1531.3 1127v4.500" stroke="#e4e4e4" stroke-width="2"/>
<path d="M1749 1127v4.500" stroke="#e4e4e4" stroke-width="2"/>
<path d="M1966.4 1127v4.500" stroke="#e4e4e4" stroke-width="2"/>
<path d="M2183.5 1127v4.500" stroke="#e4e4e4" stroke-width="2"/>
<defs><clipPath id="lc"><rect x="1240" y="1130" width="964.8" height="50"/></clipPath></defs><g clip-path="url(#lc)">
<text x="1313.6" y="1155.8" font-size="22" text-anchor="middle" fill="#555555">15 Sep 06:0..</text>
<text x="1531.3" y="1155.8" font-size="22" text-anchor="middle" fill="#555555">15 Sep 08:00</text>
<text x="1749.0" y="1155.8" font-size="22" text-anchor="middle" fill="#555555">15 Sep 10:00</text>
<text x="1966.4" y="1155.8" font-size="22" text-anchor="middle" fill="#555555">15 Sep 12:00</text>
<text x="2142.8" y="1155.8" font-size="22" fill="#555555">15 Sep 14:00</text>
</g>
<text transform="translate(1241.500 989.700) rotate(-90)" text-anchor="middle" font-size="22" fill="#555555">Log Events</text>
<path d="M1313.200 868.500L1965.500 990.500L2183 929.500" fill="none" stroke="#1ac9e8" stroke-width="4.600" stroke-linejoin="round"/>
<path d="M1530.500 1051.600L2182.700 1112.600" fill="none" stroke="#239b66" stroke-width="4.600"/>
<circle cx="1313.2" cy="868.3" r="10" fill="#1ac9e8"/>
<circle cx="1965.5" cy="990.5" r="10" fill="#1ac9e8"/>
<circle cx="2183" cy="929.3" r="10" fill="#1ac9e8"/>
<circle cx="1530.5" cy="1051.6" r="10" fill="#239b66"/>
<circle cx="2182.7" cy="1112.6" r="10" fill="#239b66"/>
<rect x="1658" y="1210.200" width="20" height="20" fill="#00c3e6"/><rect x="1710" y="1210.200" width="20" height="20" fill="#239b66"/>
<text x="1687.5" y="1230.0" font-size="20" fill="#555555">s</text>
<text x="1739.5" y="1230.0" font-size="20" fill="#555555">fu</text>
<text x="2370.0" y="1214.3" font-size="20" text-anchor="end" fill="#555555">0</text>
<path d="M2380.5 1142.8H3135.5" stroke="#e9e9e9" stroke-width="2"/>
<text x="2370.0" y="1150.1" font-size="20" text-anchor="end" fill="#555555">5</text>
<path d="M2380.5 1078.7H3135.5" stroke="#e9e9e9" stroke-width="2"/>
<text x="2370.0" y="1086.0" font-size="20" text-anchor="end" fill="#555555">10</text>
<path d="M2380.5 1014.5H3135.5" stroke="#e9e9e9" stroke-width="2"/>
<text x="2370.0" y="1021.8" font-size="20" text-anchor="end" fill="#555555">15</text>
<path d="M2380.5 950.4H3135.5" stroke="#e9e9e9" stroke-width="2"/>
<text x="2370.0" y="957.7" font-size="20" text-anchor="end" fill="#555555">20</text>
<path d="M2380.5 886.2H3135.5" stroke="#e9e9e9" stroke-width="2"/>
<text x="2370.0" y="893.5" font-size="20" text-anchor="end" fill="#555555">25</text>
<path d="M2387 856.5V1208M2380.5 1208.0H3135.5" stroke="#e4e4e4" stroke-width="2" fill="none"/>
<path d="M2488.5 1209v4.500" stroke="#e4e4e4" stroke-width="2"/>
<text x="2488.5" y="1238.0" font-size="22" text-anchor="middle" fill="#555555">Sep 15, 06</text>
<rect x="2448.5" y="1104.4" width="80" height="102.6" fill="#00c3e6" fill-opacity=".9"/>
<rect x="2448.5" y="1078.7" width="80" height="25.7" fill="#faa43a" fill-opacity=".9"/>
<path d="M2670 1209v4.500" stroke="#e4e4e4" stroke-width="2"/>
<text x="2670.0" y="1238.0" font-size="22" text-anchor="middle" fill="#555555">Sep 15, 08</text>
<rect x="2630.0" y="1104.4" width="80" height="102.6" fill="#00c3e6" fill-opacity=".9"/>
<rect x="2630.0" y="1078.7" width="80" height="25.7" fill="#faa43a" fill-opacity=".9"/>
<rect x="2630.0" y="1027.4" width="80" height="51.3" fill="#5da5da" fill-opacity=".9"/>
<rect x="2630.0" y="976.1" width="80" height="51.3" fill="#60bd68" fill-opacity=".9"/>
<rect x="2630.0" y="924.7" width="80" height="51.3" fill="#f17cb0" fill-opacity=".9"/>
<rect x="2630.0" y="873.4" width="80" height="51.3" fill="#b2912f" fill-opacity=".9"/>
<path d="M2851.7 1209v4.500" stroke="#e4e4e4" stroke-width="2"/>
<text x="2851.7" y="1238.0" font-size="22" text-anchor="middle" fill="#555555">Sep 15, 10</text>
<rect x="2811.7" y="1155.7" width="80" height="51.3" fill="#60bd68" fill-opacity=".9"/>
<rect x="2811.7" y="1104.4" width="80" height="51.3" fill="#b2912f" fill-opacity=".9"/>
<path d="M3033.4 1209v4.500" stroke="#e4e4e4" stroke-width="2"/>
<text x="3033.4" y="1238.0" font-size="22" text-anchor="middle" fill="#555555">Sep 15, 14</text>
<rect x="2993.4" y="1181.3" width="80" height="25.7" fill="#f17cb0" fill-opacity=".9"/>
<text transform="translate(2322.5 1031.2) rotate(-90)" text-anchor="middle" font-size="22" fill="#555555">count</text>
<rect x="3184" y="866" width="20" height="20" fill="#00c3e6"/>
<text x="3214.0" y="883.8" font-size="20" fill="#555555">pla</text>
<rect x="3184" y="902" width="20" height="20" fill="#faa43a"/>
<text x="3214.0" y="919.8" font-size="20" fill="#555555">feccft</text>
<rect x="3184" y="938" width="20" height="20" fill="#5da5da"/>
<text x="3214.0" y="955.8" font-size="20" fill="#555555">f</text>
<rect x="3184" y="974" width="20" height="20" fill="#60bd68"/>
<text x="3214.0" y="991.8" font-size="20" fill="#555555">fcoa</text>
<rect x="3184" y="1010" width="20" height="20" fill="#f17cb0"/>
<text x="3214.0" y="1027.8" font-size="20" fill="#555555">fu</text>
<rect x="3184" y="1046" width="20" height="20" fill="#b2912f"/>
<text x="3214.0" y="1063.8" font-size="20" fill="#555555">sepft</text>
<text x="201.5" y="1677.3" font-size="20" text-anchor="end" fill="#555555">0</text>
<path d="M212.3 1606.0H1105.5" stroke="#e9e9e9" stroke-width="2"/>
<text x="201.5" y="1613.2" font-size="20" text-anchor="end" fill="#555555">5</text>
<path d="M212.3 1541.9H1105.5" stroke="#e9e9e9" stroke-width="2"/>
<text x="201.5" y="1549.2" font-size="20" text-anchor="end" fill="#555555">10</text>
<path d="M212.3 1477.8H1105.5" stroke="#e9e9e9" stroke-width="2"/>
<text x="201.5" y="1485.1" font-size="20" text-anchor="end" fill="#555555">15</text>
<path d="M212.3 1413.8H1105.5" stroke="#e9e9e9" stroke-width="2"/>
<text x="201.5" y="1421.1" font-size="20" text-anchor="end" fill="#555555">20</text>
<path d="M218.8 1400.5V1671M212.3 1671.0H1105.5" stroke="#e4e4e4" stroke-width="2" fill="none"/>
<path d="M370.1 1672v4.500" stroke="#e4e4e4" stroke-width="2"/>
<text x="370.1" y="1701.0" font-size="22" text-anchor="middle" fill="#555555">Sep 15, 06</text>
<rect x="330.1" y="1618.8" width="80" height="51.2" fill="#00c3e6" fill-opacity=".9"/>
<rect x="330.1" y="1567.5" width="80" height="51.2" fill="#faa43a" fill-opacity=".9"/>
<path d="M662 1672v4.500" stroke="#e4e4e4" stroke-width="2"/>
<text x="662.0" y="1701.0" font-size="22" text-anchor="middle" fill="#555555">Sep 15, 08</text>
<rect x="622.0" y="1567.5" width="80" height="102.5" fill="#00c3e6" fill-opacity=".9"/>
<rect x="622.0" y="1465.0" width="80" height="102.5" fill="#faa43a" fill-opacity=".9"/>
<rect x="622.0" y="1413.8" width="80" height="51.2" fill="#5da5da" fill-opacity=".9"/>
<path d="M953.8 1672v4.500" stroke="#e4e4e4" stroke-width="2"/>
<text x="953.8" y="1701.0" font-size="22" text-anchor="middle" fill="#555555">Sep 15, 10</text>
<rect x="913.8" y="1618.8" width="80" height="51.2" fill="#00c3e6" fill-opacity=".9"/>
<rect x="913.8" y="1567.5" width="80" height="51.2" fill="#5da5da" fill-opacity=".9"/>
<rect x="913.8" y="1516.3" width="80" height="51.2" fill="#60bd68" fill-opacity=".9"/>
<text transform="translate(154.3 1534.2) rotate(-90)" text-anchor="middle" font-size="22" fill="#555555">count</text>
<rect x="220" y="1754.200" width="20" height="20" fill="#00c3e6"/>
<text x="250.3" y="1774.0" font-size="20" fill="#555555">gd_send_sms</text>
<rect x="385.7" y="1754.200" width="20" height="20" fill="#faa43a"/>
<text x="416.0" y="1774.0" font-size="20" fill="#555555">gd_send_voice</text>
<rect x="563.8" y="1754.200" width="20" height="20" fill="#5da5da"/>
<text x="594.1" y="1774.0" font-size="20" fill="#555555">gd_send_sms_failure</text>
<rect x="796" y="1754.200" width="20" height="20" fill="#60bd68"/>
<text x="826.3" y="1774.0" font-size="20" fill="#555555">gd_send_voice_failure</text>
<text x="1285.5" y="1676.6" font-size="20" text-anchor="end" fill="#555555">0</text>
<path d="M1296.5 1562.6H2190.3" stroke="#e9e9e9" stroke-width="2"/>
<text x="1285.5" y="1569.9" font-size="20" text-anchor="end" fill="#555555">5</text>
<path d="M1296.5 1455.9H2190.3" stroke="#e9e9e9" stroke-width="2"/>
<text x="1285.5" y="1463.2" font-size="20" text-anchor="end" fill="#555555">10</text>
<path d="M1303.1 1400.2V1670.3M1296.5 1670.3H2190.3" stroke="#e4e4e4" stroke-width="2" fill="none"/>
<path d="M1519 1671.3v4.500" stroke="#e4e4e4" stroke-width="2"/>
<text x="1519.0" y="1700.3" font-size="22" text-anchor="middle" fill="#555555">Sep 15, 08</text>
<rect x="1479.0" y="1583.9" width="80" height="85.4" fill="#00c3e6" fill-opacity=".9"/>
<rect x="1479.0" y="1498.6" width="80" height="85.4" fill="#faa43a" fill-opacity=".9"/>
<path d="M1972.9 1671.3v4.500" stroke="#e4e4e4" stroke-width="2"/>
<text x="1972.9" y="1700.3" font-size="22" text-anchor="middle" fill="#555555">Sep 15, 10</text>
<rect x="1932.9" y="1413.2" width="80" height="256.1" fill="#5da5da" fill-opacity=".9"/>
<text transform="translate(1238.6 1533.5) rotate(-90)" text-anchor="middle" font-size="22" fill="#555555">count</text>
<rect x="1534.1" y="1754.200" width="20" height="20" fill="#00c3e6"/>
<text x="1565.1" y="1774.0" font-size="20" fill="#555555">limit_mu</text>
<rect x="1652" y="1754.200" width="20" height="20" fill="#faa43a"/>
<text x="1683.0" y="1774.0" font-size="20" fill="#555555">limit_wc</text>
<rect x="1764.3" y="1754.200" width="20" height="20" fill="#5da5da"/>
<text x="1795.3" y="1774.0" font-size="20" fill="#555555">pwd_leak</text>
<text x="2312.5" y="1416.2" font-size="27.5" textLength="130.5" lengthAdjust="spacingAndGlyphs" fill="#555">groupby(ip)</text>
<text x="3015.5" y="1416.2" font-size="27.5" textLength="65.0" lengthAdjust="spacingAndGlyphs" fill="#555">count</text>
<text x="2313.0" y="1478.2" font-size="29" textLength="196.0" lengthAdjust="spacingAndGlyphs" fill="#111">149.129.19.101</text>
<text x="3015.5" y="1478.2" font-size="29" textLength="32.5" lengthAdjust="spacingAndGlyphs" fill="#3b86c8">46</text>
<defs><linearGradient id="fs" x1="0" y1="0" x2="0" y2="1"><stop offset="0" stop-color="#000" stop-opacity="0"/><stop offset="1" stop-color="#000" stop-opacity=".07"/></linearGradient><linearGradient id="fv" x1="0" y1="0" x2="1" y2="0"><stop offset="0" stop-color="#000" stop-opacity=".14"/><stop offset="1" stop-color="#000" stop-opacity="0"/></linearGradient></defs>
<rect x="100" y="1834" width="3274" height="8" fill="url(#fs)"/>
<rect x="522" y="1844" width="7" height="56" fill="url(#fv)"/>
<path d="M3315 1844v56" stroke="#d8d8d8" stroke-width="2"/>
<g fill="#999"><path d="M71.500 1878.500c2.500-.800 4-2 5-3.800c-4.800-1.500-8-5-8-9c0-3 1.600-5.600 4.300-7.400c-.800 1.600-1.200 3.200-1.200 5c0 5.800 5 10.500 11.800 11.600c-2 1.500-4.300 2.200-6.800 2.300c-1.500 .900-3.200 1.300-5.100 1.300z"/><path d="M84.300 1855c6.600 0 11.900 4 11.900 9c0 3-1.800 5.600-4.700 7.300c.3 1.800 1.200 3.300 2.500 4.600c-2.800-.1-5-1-6.800-2.600c-1 .2-1.900 .200-2.900 .200c-6.600 0-11.900-4-11.900-9s5.300-9.500 11.900-9.500z"/></g>
<text x="82.0" y="1895.9" font-size="16.5" text-anchor="middle" textLength="41.0" lengthAdjust="spacingAndGlyphs" fill="#999" stroke="#999" stroke-width=".55">Chats</text>
<g fill="#999"><circle cx="260.600" cy="1863.200" r="5.200"/><path d="M251.500 1879.500v-5c0-3 2.500-4.800 5-4.800h8.200c2.500 0 5 1.800 5 4.800v5z"/><circle cx="252.200" cy="1858.200" r="3.100"/><circle cx="269" cy="1858.200" r="3.100"/><path d="M247.400 1869v-3c0-2 1.500-3.300 3.300-3.300h2.600c.3 2 1.100 3.500 2.500 4.800c-2.400 .3-4.300 1.200-5.300 3.300c-1.300 0-2.300-.6-3.100-1.800zM273.900 1869v-3c0-2-1.500-3.300-3.300-3.300h-2.600c-.3 2-1.100 3.500-2.500 4.800c2.400 .3 4.300 1.200 5.300 3.300c1.300 0 2.300-.6 3.100-1.800z"/></g>
<text x="260.5" y="1895.9" font-size="16.5" text-anchor="middle" textLength="65.5" lengthAdjust="spacingAndGlyphs" fill="#999" stroke="#999" stroke-width=".55">Channels</text>
<g fill="#999"><circle cx="438.900" cy="1861.300" r="6.300"/><path d="M427.800 1879.500v-5.500c0-3.500 2.800-5.500 5.800-5.500h10.600c3 0 5.800 2 5.800 5.500v5.500z"/></g>
<text x="438.8" y="1895.9" font-size="16.5" text-anchor="middle" textLength="63.5" lengthAdjust="spacingAndGlyphs" fill="#999" stroke="#999" stroke-width=".55">Contacts</text>
<text x="542.5" y="1880.0" font-size="25.5" textLength="385.0" lengthAdjust="spacingAndGlyphs" fill="#aaa">Here is your Smart Chat (Ctrl+Space)</text>
<g fill="#fff" stroke="#585858" stroke-width="1.900" stroke-linejoin="round"><path d="M3334.500 1862.800l9.500-1l1.800 17l-9.800 1.200q-1.500 0-1.800-1.500l-1.400-13.500q0-1.800 1.700-2.200z"/><path d="M3343.300 1860.200l13.300 1.700q1.800 .4 1.600 2.200l-1.700 13q-.4 1.600-2 1.500l-12.700-1.800z"/><rect x="3337.600" y="1866" width="16.600" height="16.400" rx="2.200"/></g><path d="M3341.700 1871h8.200M3341.700 1874.100h8.200M3341.700 1877.300h5" stroke="#585858" stroke-width="1.700" fill="none"/>
</svg>
</body></html>
